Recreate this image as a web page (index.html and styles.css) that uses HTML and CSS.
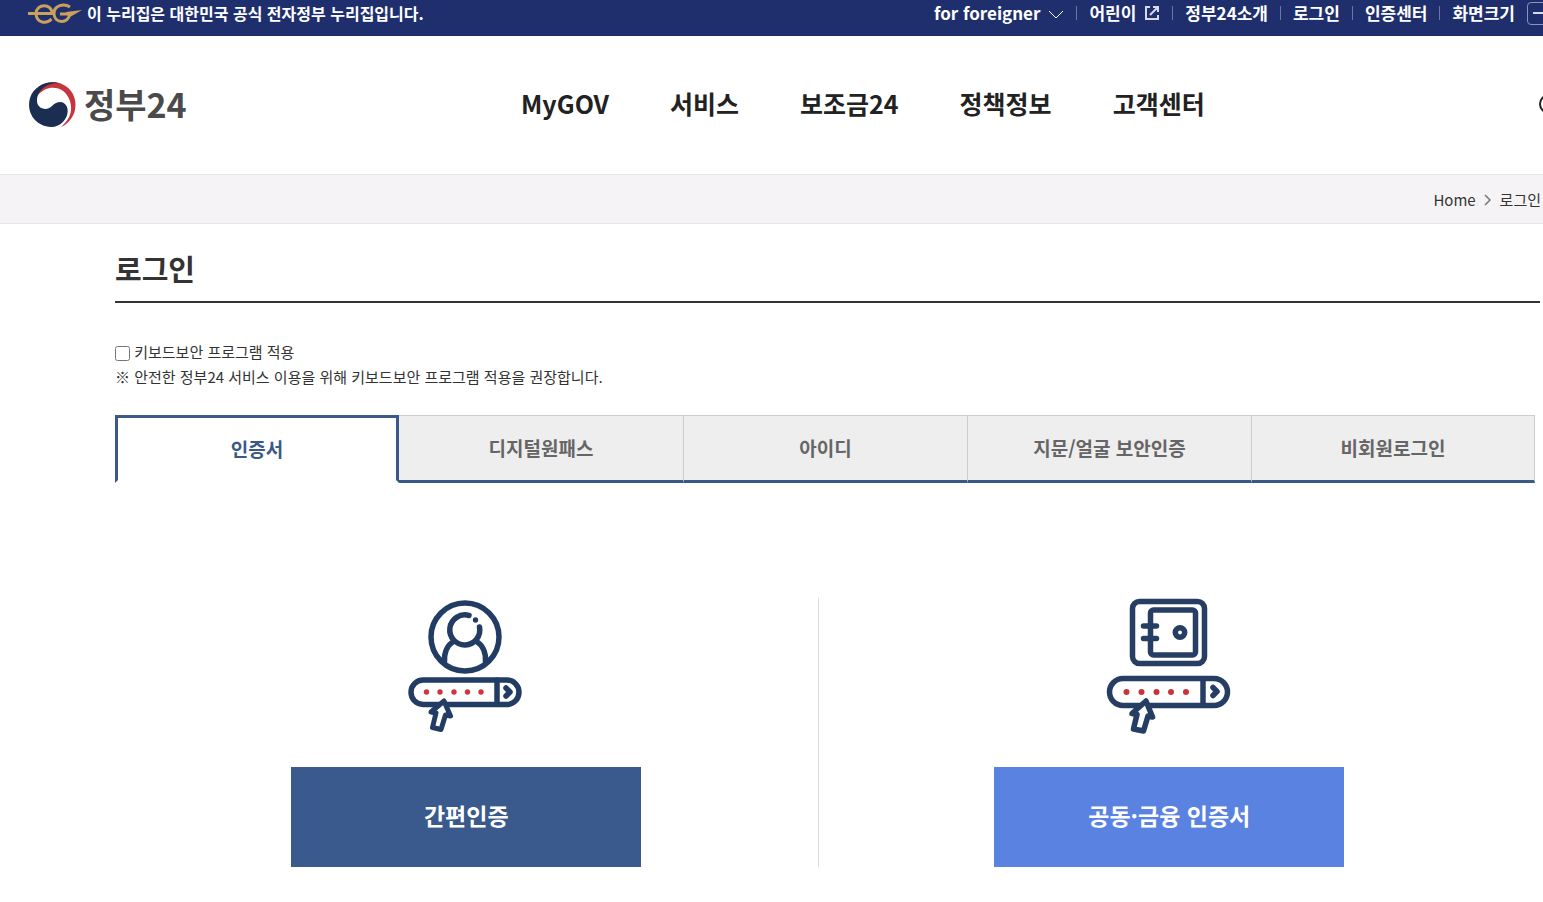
FILE: index.html
```html
<!DOCTYPE html>
<html lang="ko">
<head>
    <meta charset="UTF-8">
    <title>로그인 | 정부24</title>
    <link rel="stylesheet" href="styles.css">
</head>
<body>
    <div class="topbar">
        <p class="official">
            <svg width="54" height="22" viewBox="28 2 54 22" fill="none" stroke="#c9a15c" stroke-width="3" aria-hidden="true">
                <path d="M28 13.500H52C52 3 36.500 3 36 13.500C36.500 24 47 24 51.500 19"/>
                <path d="M70 7C64 3 54 5 54 13.500C54 24 69 24 69.500 14H60"/>
                <path d="M66 12L82 10L70 17Z" fill="#c9a15c" stroke="none"/>
            </svg>
            이 누리집은 대한민국 공식 전자정부 누리집입니다.
        </p>
        <ul class="util">
            <li><button type="button">for foreigner
                <svg width="16" height="12" viewBox="0 -3 16 12" fill="none" stroke="#fff" aria-hidden="true"><path d="M1 1l7 7 7-7"/></svg>
            </button></li>
            <li><a href="#">어린이
                <svg width="16" height="16" viewBox="0 0 16 16" fill="none" stroke="#d5d9ea" stroke-width="2" aria-hidden="true"><path d="M6 2H2v12h12v-4M6 10l8-8M9 2h5v5"/></svg>
            </a></li>
            <li><a href="#">정부24소개</a></li>
            <li><a href="#">로그인</a></li>
            <li><a href="#">인증센터</a></li>
            <li>화면크기 <button type="button" class="zoom-out" aria-label="화면 축소"></button></li>
        </ul>
    </div>

    <header class="header">
        <a href="#" class="logo">
            <svg width="48" height="48" viewBox="28 80 48 48" aria-hidden="true">
                <path fill="#c8343b" d="M38 87C50 78 70 82 74.500 98C78 110 72 122 61 127C70 119 73 111 70 101C65 85 47 84 38 95Z"/>
                <path fill="#1b2d50" d="M62 84C50 79 34 85 30 98C26 112 35 126 51 127C63 127 70 115 67 107C64 100 57 101 52 106C46 112 37 108 37 101C37 89 50 81 62 84Z"/>
            </svg>
            정부24
        </a>
        <nav class="gnb">
            <a href="#">MyGOV</a>
            <a href="#">서비스</a>
            <a href="#">보조금24</a>
            <a href="#">정책정보</a>
            <a href="#">고객센터</a>
        </nav>
        <button type="button" class="search" aria-label="검색">
            <svg width="24" height="24" viewBox="0 0 24 24" fill="none" stroke="#222" stroke-width="2" aria-hidden="true"><circle cx="10" cy="12" r="9"/><path d="M17 18l6 5"/></svg>
        </button>
    </header>

    <nav class="location">
        <a href="#">Home</a>
        <svg width="8" height="14" viewBox="0 -2 8 14" fill="none" stroke="#777" stroke-width="1.500" aria-hidden="true"><path d="M1 1l5 5-5 5"/></svg>
        <a href="#">로그인</a>
    </nav>

    <main class="content">
        <h1>로그인</h1>

        <div class="security">
            <input type="checkbox" id="keySecurity">
            <label for="keySecurity">키보드보안 프로그램 적용</label>
            <p>※ 안전한 정부24 서비스 이용을 위해 키보드보안 프로그램 적용을 권장합니다.</p>
        </div>

        <div class="tabs">
            <button type="button" class="active">인증서</button>
            <button type="button">디지털원패스</button>
            <button type="button">아이디</button>
            <button type="button">지문/얼굴 보안인증</button>
            <button type="button">비회원로그인</button>
        </div>

        <div class="methods">
            <section>
                <svg width="150" height="138" viewBox="1 8 150 138" fill="none" stroke="#223c63" stroke-width="5.500" stroke-linecap="round" stroke-linejoin="round" aria-hidden="true">
                    <circle cx="75" cy="47" r="34"/>
                    <path d="M79 25.500A15 15 0 1 0 89.500 37M64 51C56 56 54 63 54.500 72M86 51C94 56 96 63 95.500 72"/>
                    <circle cx="85.500" cy="30" r="2.700" fill="#223c63" stroke="none"/>
                    <rect x="21" y="90" width="108" height="24.500" rx="12.200"/>
                    <path d="M107 90v24M116 98l4 4-4 4"/>
                    <path fill="#fff" stroke-width="5" d="M54 111L60.500 126L55.500 125L51 139.500L42.500 137.500L46 123L41 122Z"/>
                    <g fill="#d0353d" stroke="none">
                        <circle cx="36.500" cy="102" r="2.700"/><circle cx="50" cy="102" r="2.700"/><circle cx="64" cy="102" r="2.700"/><circle cx="77.500" cy="102" r="2.700"/><circle cx="91" cy="102" r="2.700"/>
                    </g>
                </svg>
                <button type="button" class="simple">간편인증</button>
            </section>
            <section>
                <svg width="160" height="138" viewBox="0 8 160 138" fill="none" stroke="#263e63" stroke-width="5.500" stroke-linecap="round" stroke-linejoin="round" aria-hidden="true">
                    <rect x="43.500" y="11.500" width="72" height="62" rx="7"/>
                    <rect x="61.500" y="20" width="45" height="45" rx="3"/>
                    <path d="M54.500 36h13M54.500 48.500h13"/>
                    <circle cx="91" cy="42.500" r="4.700"/>
                    <rect x="20.500" y="88.500" width="118" height="27" rx="13.500"/>
                    <path d="M114 89v26M124 97.500l4 4-4 4"/>
                    <path fill="#fff" d="M57 111L63.500 127L59 126L54.500 141L44.500 139L48 124.500L43 123.500Z"/>
                    <g fill="#c9343c" stroke="none">
                        <circle cx="37.500" cy="102" r="3"/><circle cx="52.500" cy="102" r="3"/><circle cx="67.500" cy="102" r="3"/><circle cx="82" cy="102" r="3"/><circle cx="97" cy="102" r="3"/>
                    </g>
                </svg>
                <button type="button" class="joint">공동·금융 인증서</button>
            </section>
        </div>
    </main>
</body>
</html>
```

FILE: styles.css
```css
* {
    box-sizing: border-box;
}
body {
    margin: 0;
    font-family: "Noto Sans CJK KR", "Noto Sans", sans-serif;
    font-size: 15px;
    line-height: 25px;
    color: #333;
    background: #fff;
    overflow-x: hidden;
}
h1, p, ul {
    margin: 0;
    padding: 0;
}
a {
    color: inherit;
    text-decoration: none;
}
button {
    padding: 0;
    border: 0;
    background: none;
    color: inherit;
    font: inherit;
    cursor: pointer;
}

/* top bar */
.topbar {
    display: flex;
    justify-content: space-between;
    height: 36px;
    padding-left: 28px;
    background: #1f2f6e;
    color: #fff;
    font-weight: bold;
    line-height: 26px;
    white-space: nowrap;
    overflow: hidden;
}
.official {
    display: flex;
    gap: 5px;
    height: 26px;
    align-items: center;
    font-size: 16px;
}
.util {
    display: flex;
    height: 26px;
    margin-right: -8px;
    list-style: none;
    font-size: 17px;
}
.util li, .util a, .util li > button {
    display: flex;
    align-items: center;
}
.util a, .util button {
    gap: 8px;
}
.util li + li::before {
    content: "";
    width: 1px;
    height: 14px;
    margin: 0 12px;
    background: #6b76a3;
}
.util .zoom-out {
    width: 24px;
    height: 23px;
    margin-left: 12px;
    justify-content: center;
    border: 1px solid #8a93b8;
    border-radius: 4px;
}
.zoom-out::before {
    content: "";
    width: 12px;
    height: 2px;
    background: #d5d9ea;
}

/* header */
.header {
    display: flex;
    justify-content: space-between;
    align-items: center;
    height: 138px;
    padding: 0 0 3px 28px;
}
.logo {
    display: flex;
    align-items: center;
    gap: 8px;
    color: #4a4a4a;
    font-size: 34px;
    font-weight: bold;
}
.gnb {
    display: flex;
    gap: 61px;
    color: #222;
    font-size: 25px;
    font-weight: bold;
}
.search {
    display: flex;
    margin-right: -20px;
}

/* breadcrumb */
.location {
    display: flex;
    justify-content: flex-end;
    align-items: center;
    gap: 8px;
    height: 50px;
    padding-right: 2px;
    background: #f5f3f5;
    border-top: 1px solid #e5e5e5;
    border-bottom: 1px solid #e5e5e5;
}

/* content */
.content {
    padding: 20px 3px 35px 115px;
}
h1 {
    padding-bottom: 8px;
    border-bottom: 2px solid #333;
    font-size: 29px;
    line-height: 49px;
}
.security {
    margin-top: 36px;
}
.security input {
    width: 15px;
    height: 15px;
    margin: 0;
    vertical-align: -3px;
}
.tabs {
    display: grid;
    grid-template-columns: repeat(5, 1fr);
    margin: 26px 5px 0 0;
}
.tabs button {
    height: 68px;
    padding-bottom: 2px;
    border-top: 1px solid #ccc;
    border-left: 1px solid #ccc;
    border-bottom: 3px solid #3b5988;
    background: #eee;
    color: #666;
    font-size: 19px;
    font-weight: bold;
}
.tabs button:last-child {
    border-right: 1px solid #ccc;
}
.tabs .active {
    border: 3px solid #3b5988;
    border-bottom-color: transparent;
    background: #fff;
    color: #3b5988;
}
.tabs .active + button {
    border-left: 0;
}

/* login methods */
.methods {
    display: grid;
    grid-template-columns: 1fr 1fr;
    margin: 115px 20px 0 0;
}
.methods section {
    display: flex;
    flex-direction: column;
    align-items: center;
    gap: 31px;
}
.methods section + section {
    border-left: 1px solid #ddd;
}
.methods button {
    width: 350px;
    height: 100px;
    padding-bottom: 3px;
    color: #fff;
    font-size: 23px;
    font-weight: bold;
}
.methods .simple {
    background: #3a598c;
}
.methods .joint {
    background: #5a82e0;
}
```
